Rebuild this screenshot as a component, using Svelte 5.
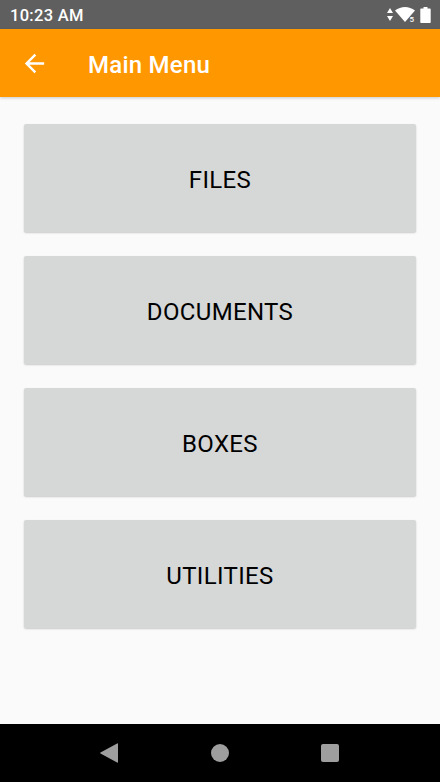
<script>
  const items = ['FILES', 'DOCUMENTS', 'BOXES', 'UTILITIES'];
</script>

<div class="screen">
  <div class="status-bar">
    <span class="time">10:23 AM</span>
    <div class="status-icons">
      <svg width="7" height="16" viewBox="0 0 7 16">
        <path d="M4 1 7 6H1zM1 9h6l-3 5z" fill="#fff" />
      </svg>
      <svg width="23" height="16" viewBox="0 0 23 16">
        <path d="M0 3.500C3 1.200 6.500 0 10 0s7 1.200 10 3.500L10 15z" fill="#fff" />
        <text x="14.500" y="15" class="net">5</text>
      </svg>
      <svg width="11" height="16" viewBox="0 0 11 16">
        <path d="M3.500 0h4v1.500H10a.7.7 0 0 1 .7.7v13.100a.7.7 0 0 1-.7.7H1a.7.7 0 0 1-.7-.7V2.200a.7.7 0 0 1 .7-.7h2.500z" fill="#fff" />
      </svg>
    </div>
  </div>

  <header class="app-bar">
    <svg class="back" width="29" height="29" viewBox="0 0 24 24">
      <path d="M20 11H7.830l5.590-5.590L12 4l-8 8 8 8 1.410-1.410L7.830 13H20z" fill="#fff" />
    </svg>
    <h1>Main Menu</h1>
  </header>

  <main class="menu">
    {#each items as item}
      <button class="menu-btn">{item}</button>
    {/each}
  </main>

  <nav class="nav-bar">
    <svg width="18" height="20" viewBox="0 0 18 20">
      <path d="M18 1v18a.6.6 0 0 1-.9.5L.5 10.500a.6.6 0 0 1 0-1L17.100 .5a.6.6 0 0 1 .9.5z" fill="#9e9e9e" />
    </svg>
    <span class="circle"></span>
    <span class="square"></span>
  </nav>
</div>

<style>
  :global(body) {
    margin: 0;
  }

  .screen {
    display: flex;
    flex-direction: column;
    width: 440px;
    height: 782px;
    overflow: hidden;
    background: #fafafa;
    font-family: Roboto, sans-serif;
  }

  .status-bar {
    display: flex;
    align-items: center;
    justify-content: space-between;
    flex: 0 0 29px;
    padding: 0 9px 0 10px;
    background: #5f5f5f;
    color: #fff;
  }

  .time {
    padding-top: 1px;
    font-size: 16.500px;
    font-weight: 500;
    letter-spacing: 0.3px;
  }

  .status-icons {
    display: flex;
    align-items: center;
    gap: 2px;
  }

  .net {
    font-size: 8px;
    font-weight: 500;
    fill: #fff;
  }

  .app-bar {
    display: flex;
    align-items: center;
    flex: 0 0 68px;
    padding-left: 20px;
    background: #ff9800;
    box-shadow: 0 1px 3px rgba(0, 0, 0, 0.2);
    color: #fff;
    position: relative;
  }

  .back {
    margin-right: 39px;
  }

  h1 {
    margin: 0;
    padding-top: 4px;
    font-size: 24px;
    font-weight: 500;
    letter-spacing: 0.25px;
  }

  .menu {
    display: flex;
    flex-direction: column;
    flex: 1;
    gap: 24px;
    padding: 27px 24px 0;
  }

  .menu-btn {
    height: 108px;
    padding: 4px 0 0;
    border: none;
    border-radius: 2px;
    background: #d6d7d7;
    box-shadow: 0 1px 2px rgba(0, 0, 0, 0.2);
    color: #000;
    font-family: inherit;
    font-size: 24px;
    font-weight: 400;
    letter-spacing: 0.35px;
  }

  .nav-bar {
    display: flex;
    align-items: center;
    justify-content: space-between;
    flex: 0 0 58px;
    padding: 0 101px 0 100px;
    background: #000;
  }

  .circle {
    width: 18px;
    height: 18px;
    border-radius: 50%;
    background: #9e9e9e;
  }

  .square {
    width: 18px;
    height: 18px;
    border-radius: 2px;
    background: #9e9e9e;
  }
</style>
